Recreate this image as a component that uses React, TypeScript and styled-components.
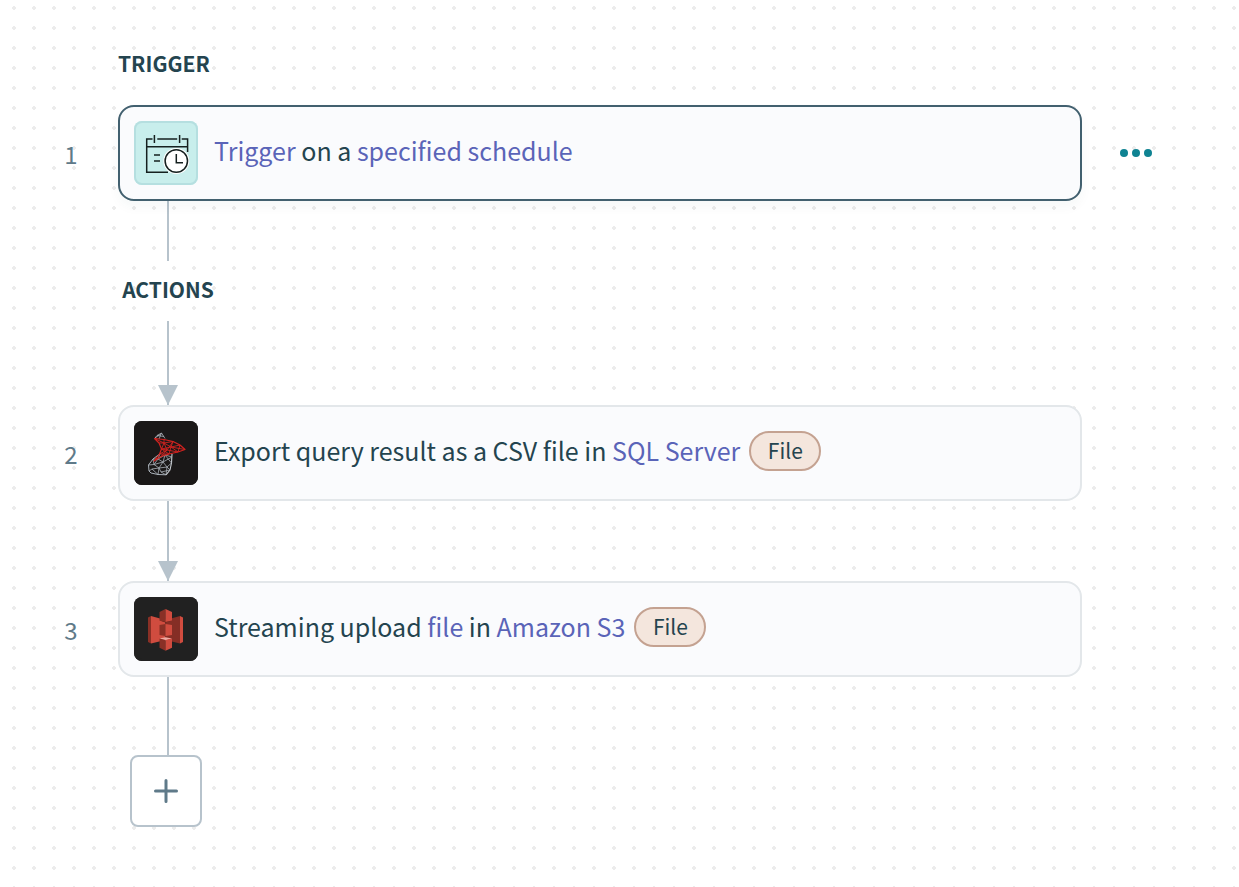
import React from "react";
import styled, { createGlobalStyle } from "styled-components";

const GlobalStyle = createGlobalStyle`
  *, *::before, *::after { box-sizing: border-box; }
  body {
    margin: 0;
    background-color: #fff;
    background-image: radial-gradient(circle at 10px 10px, #ececec 0 2px, transparent 2px);
    background-size: 20px 20px;
    background-position: 4px -2px;
    font-family: "Noto Sans CJK SC", "Open Sans", sans-serif;
    color: #24444f;
  }
`;

const Canvas = styled.main`
  min-height: 100vh;
  padding: 45px 0 60px;
`;

const TriggerTitle = styled.h2`
  margin: 0 0 24px;
  padding-left: 118px;
  font-size: 21px;
  line-height: 36px;
  font-weight: 700;
`;

const ActionsTitle = styled.h2`
  margin: 0 0 0 118px;
  padding-bottom: 4px;
  width: 100px;
  text-align: center;
  font-size: 21px;
  line-height: 56px;
  font-weight: 700;
`;

const Row = styled.section`
  display: grid;
  grid-template-columns: 118px minmax(0, 1fr) 157px;
  align-items: center;
`;

const StepNumber = styled.span`
  padding-left: 24px;
  padding-top: 2px;
  text-align: center;
  font-size: 24px;
  line-height: 32px;
  color: #5f7a89;
`;

const Card = styled.article<{ $selected?: boolean }>`
  display: flex;
  align-items: center;
  gap: 16px;
  min-height: 96px;
  padding: 14px;
  border: 2px solid ${(p) => (p.$selected ? "#42606f" : "#e3e7ea")};
  border-radius: 16px;
  background: #fafbfd;
  box-shadow: ${(p) => (p.$selected ? "0 6px 12px rgba(36, 68, 79, 0.04)" : "none")};
`;

const IconTile = styled.span<{ $fill: string; $edge: string }>`
  display: flex;
  flex: none;
  width: 64px;
  height: 64px;
  border-radius: 8px;
  background: ${(p) => p.$fill};
  box-shadow: inset 0 0 0 2px ${(p) => p.$edge};
`;

const Description = styled.div`
  display: flex;
  align-items: center;
  gap: 9px;
  padding-bottom: 4px;
`;

const Sentence = styled.p`
  margin: 0;
  padding-bottom: 2px;
  font-size: 25px;
  line-height: 38px;
`;

const Term = styled.span`
  color: #5a64b8;
`;

const FileTag = styled.span`
  min-width: 72px;
  height: 40px;
  padding: 0 16px;
  border: 2px solid #c4a291;
  border-radius: 20px;
  background: #f4e6dd;
  text-align: center;
  font-size: 21px;
  line-height: 34px;
`;

const MenuButton = styled.button`
  display: flex;
  gap: 4px;
  justify-self: start;
  margin-left: 30px;
  padding: 16px 8px;
  border: 0;
  background: none;
  cursor: pointer;
`;

const MenuDot = styled.span`
  width: 8px;
  height: 8px;
  border-radius: 50%;
  background: #0f8392;
`;

const Connector = styled.div<{ $length: number; $arrow?: boolean }>`
  display: flex;
  flex-direction: column;
  align-items: center;
  justify-content: flex-end;
  width: 20px;
  height: ${(p) => p.$length}px;
  margin-left: 158px;
  background: linear-gradient(#b7c3cc, #b7c3cc) center / 2px 100% no-repeat;

  &::after {
    content: "";
    display: ${(p) => (p.$arrow ? "block" : "none")};
    width: 20px;
    height: 20px;
    background: #b7c3cc;
    clip-path: polygon(0 0, 100% 0, 50% 100%);
  }
`;

const AddButton = styled.button`
  display: flex;
  align-items: center;
  justify-content: center;
  width: 72px;
  height: 72px;
  margin-left: 130px;
  padding: 0;
  border: 2px solid #b7c3cc;
  border-radius: 8px;
  background: #fff;
  cursor: pointer;
`;

const ScheduleIcon = () => (
  <svg width="64" height="64" viewBox="0 0 64 64" fill="none" stroke="#15201f" strokeWidth="1.5" aria-hidden="true">
    <path d="M18.5 18H12.7V51.3H34M47.7 18H53.6V31M23.3 18H43.2M12.7 25.7H53.6" />
    <path d="M20.4 14V22M45.6 14V22M20 34H26M20 40H26" />
    <circle cx="42.3" cy="40" r="13" fill="#fff" stroke="none" />
    <circle cx="42.3" cy="40" r="11.2" fill="#fff" />
    <path d="M42.3 33V41.7H49" />
  </svg>
);

const SqlServerIcon = () => (
  <svg width="64" height="64" viewBox="0 0 64 64" fill="none" strokeLinejoin="round" aria-hidden="true">
    <g stroke="#a9b0b8" strokeWidth="0.8">
      <path d="M21 17L23 14.5L27.5 12L31 17.5M23 14.5L30 15.5M21 17L27.5 12.5M25 18L27.5 12" />
      <path d="M27 32L19 38L14.5 44L15 50L17 52L24 53.5L32 53.8" strokeWidth="1" />
      <path d="M32 53.8L36 49L37.5 42L38 33" stroke="#c9ced3" strokeWidth="1.1" />
      <path d="M26 32.5L24 38L29 41L31 34L37.5 42L33 46L29 41L20 43.5L24 38L19 38L20 43.5L14.5 44M20 43.5L25 47L29 41M18 48L25 47L33 46L36 49L27 51L25 47L24 53.5L18 48L15 50M27 51L32 53.8L33 46M31 34L38 36L29 41M24 38L31 34" />
    </g>
    <g stroke="#d3221f" strokeWidth="0.9">
      <path d="M20.5 17.5L30 18.5L39 20.5L46 24L51 28.5L44 31L35 33L27 35.5L20 40L25.5 33L27.5 28L25 22Z" strokeWidth="1.2" />
      <path d="M20.5 17.5L30 22L39 20.5L37 26L46 24L44 31L37 26L30 22L27.5 28L37 26L51 28.5M25 22L30 22L33 29L27.5 28L35 33L37 26M33 29L44 31M33 29L25.5 33L35 33M33 29L39 20.5M30 18.5L30 22M33 29L27 35.5" />
    </g>
  </svg>
);

const AmazonS3Icon = () => (
  <svg width="64" height="64" viewBox="0 0 64 64" aria-hidden="true">
    <path fill="#8a3026" d="M14 20.5L17 19V46.5L14 45Z" />
    <path fill="#d04c3f" d="M17 19L31.5 23V43L17 46.5Z" />
    <path fill="#852e25" d="M31.5 23L46 19V46.5L31.5 43Z" />
    <path fill="#d04c3f" d="M46 19L49 20.5V45L46 46.5Z" />
    <path fill="#5e2019" d="M25.5 23.5L31.5 22.5L38 23.5L31.5 25.5Z" />
    <path fill="#8a3026" d="M25.5 28L31.5 27V39L25.5 38Z" />
    <path fill="#d04c3f" d="M31.5 27L38 28V38L31.5 39Z" />
    <path fill="#8a3026" d="M25.5 15L31.5 12V25L25.5 23.5Z" />
    <path fill="#d04c3f" d="M31.5 12L38 15V23.5L31.5 25Z" />
    <path fill="#efaaa2" d="M25.5 41.5L31.5 40.3L38 41.5L31.5 43.5Z" />
    <path fill="#8a3026" d="M25.5 41.5L31.5 43V53.7L25.5 50.7Z" />
    <path fill="#d04c3f" d="M31.5 43L38 41.5V50.7L31.5 53.7Z" />
  </svg>
);

export default function App() {
  return (
    <>
      <GlobalStyle />
      <Canvas>
        <TriggerTitle>TRIGGER</TriggerTitle>
        <Row>
          <StepNumber>1</StepNumber>
          <Card $selected>
            <IconTile $fill="#c8eeec" $edge="#b5dfe0">
              <ScheduleIcon />
            </IconTile>
            <Description>
              <Sentence>
                <Term>Trigger</Term> on a <Term>specified schedule</Term>
              </Sentence>
            </Description>
          </Card>
          <MenuButton type="button" aria-label="Step options">
            <MenuDot />
            <MenuDot />
            <MenuDot />
          </MenuButton>
        </Row>
        <Connector $length={60} />
        <ActionsTitle>ACTIONS</ActionsTitle>
        <Connector $length={84} $arrow />
        <Row>
          <StepNumber>2</StepNumber>
          <Card>
            <IconTile $fill="#1a1818" $edge="#1a1818">
              <SqlServerIcon />
            </IconTile>
            <Description>
              <Sentence>
                Export query result as a CSV file in <Term>SQL Server</Term>
              </Sentence>
              <FileTag>File</FileTag>
            </Description>
          </Card>
        </Row>
        <Connector $length={80} $arrow />
        <Row>
          <StepNumber>3</StepNumber>
          <Card>
            <IconTile $fill="#212121" $edge="#212121">
              <AmazonS3Icon />
            </IconTile>
            <Description>
              <Sentence>
                Streaming upload <Term>file</Term> in <Term>Amazon S3</Term>
              </Sentence>
              <FileTag>File</FileTag>
            </Description>
          </Card>
        </Row>
        <Connector $length={78} />
        <AddButton type="button" aria-label="Add step">
          <svg width="24" height="24" viewBox="0 0 24 24" stroke="#5f7a89" strokeWidth="3" strokeLinecap="round" aria-hidden="true">
            <path d="M12 1.5V22.5M1.5 12H22.5" />
          </svg>
        </AddButton>
      </Canvas>
    </>
  );
}
